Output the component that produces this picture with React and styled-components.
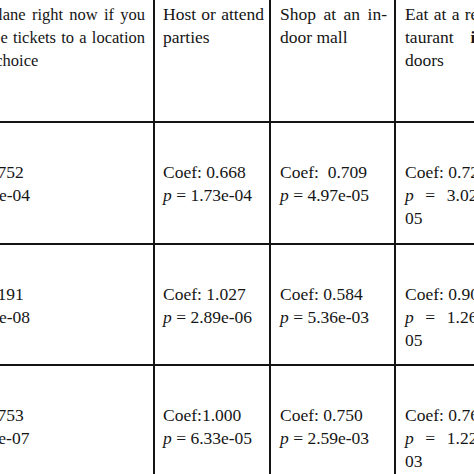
import React from "react";
import styled, { createGlobalStyle } from "styled-components";

const Global = createGlobalStyle`
  html, body { margin: 0; padding: 0; background: #fff; overflow: hidden; }
  body { width: 474px; height: 474px; }
`;

const Viewport = styled.div`
  width: 474px;
  height: 474px;
  overflow: hidden;
  background: #fff;
`;

const Table = styled.div`
  display: grid;
  grid-template-columns: 221px 114px 123px 102px;
  grid-template-rows: 121px 120px 119px 120px;
  gap: 2px;
  background: #141414;
  margin-left: -68px;
  width: max-content;
  font-family: "Liberation Serif", "Times New Roman", serif;
  font-size: 17.5px;
  line-height: 23px;
  color: #151515;
`;

const Cell = styled.div`
  background: #fff;
  padding: ${(p) => (p.$head ? "3px" : "38px")} ${(p) => p.$padR} 0 ${(p) => p.$padL};
  font-size: ${(p) => p.$size || "inherit"};
  overflow: hidden;
`;

const Line = styled.div`
  text-align: ${(p) => p.$align || "left"};
  text-align-last: ${(p) => p.$align || "auto"};
  word-spacing: ${(p) => p.$ws || "normal"};
  white-space: ${(p) => (p.$align === "right" ? "nowrap" : "normal")};
  margin-left: ${(p) => (p.$align === "right" ? "-40px" : "0")};
`;

const P = styled.i`
  font-style: italic;
`;

const Strong = styled.b`
  font-weight: bold;
`;

const pLine = (v) => (
  <>
    <P>p</P> = {v}
  </>
);

const cols = [
  { l: "9px", r: "8px" },
  { l: "8px", r: "5px" },
  { l: "9px", r: "7px" },
  { l: "9px", r: "7px" },
];

const J = "justify";

const header = [
  {
    l: "11px",
    size: "16.5px",
    lines: [
      { t: "be on a plane right now if you", a: "right", ws: "2.1px" },
      { t: "free tickets to a location", a: "right", ws: "1.1px" },
      { t: "of your choice" },
    ],
  },
  { lines: [{ t: "Host or attend", a: J, ws: "-1px" }, { t: "parties" }] },
  { lines: [{ t: "Shop at an in-", a: J, ws: "-1px" }, { t: "door mall" }] },
  {
    lines: [
      { t: "Eat at a res-", a: J, ws: "-1.2px" },
      {
        t: (
          <>
            taurant <Strong>in-</Strong>
          </>
        ),
        a: J,
        ws: "-1px",
      },
      { t: "doors" },
    ],
  },
];

const rows = [
  [
    [{ t: "Coef: 0.752" }, { t: pLine("1.23e-04") }],
    [{ t: "Coef: 0.668" }, { t: pLine("1.73e-04") }],
    [{ t: "Coef:\u00a0 0.709" }, { t: pLine("4.97e-05") }],
    [{ t: "Coef: 0.725" }, { t: pLine("3.02e-"), a: J }, { t: "05" }],
  ],
  [
    [{ t: "Coef: 1.191" }, { t: pLine("4.52e-08") }],
    [{ t: "Coef: 1.027" }, { t: pLine("2.89e-06") }],
    [{ t: "Coef: 0.584" }, { t: pLine("5.36e-03") }],
    [{ t: "Coef: 0.903" }, { t: pLine("1.26e-"), a: J }, { t: "05" }],
  ],
  [
    [{ t: "Coef: 0.753" }, { t: pLine("3.11e-07") }],
    [{ t: "Coef:1.000" }, { t: pLine("6.33e-05") }],
    [{ t: "Coef: 0.750" }, { t: pLine("2.59e-03") }],
    [{ t: "Coef: 0.765" }, { t: pLine("1.22e-"), a: J }, { t: "03" }],
  ],
];

const renderLines = (lines) =>
  lines.map((l, k) => (
    <Line key={k} $align={l.a} $ws={l.ws}>
      {l.t}
    </Line>
  ));

export default function App() {
  return (
    <Viewport>
      <Global />
      <Table>
        {header.map((c, i) => (
          <Cell
            key={"h" + i}
            $head
            $size={c.size}
            $padL={c.l || cols[i].l}
            $padR={cols[i].r}
          >
            {renderLines(c.lines)}
          </Cell>
        ))}
        {rows.map((r, ri) =>
          r.map((c, ci) => (
            <Cell key={ri + "-" + ci} $padL={cols[ci].l} $padR={cols[ci].r}>
              {renderLines(c)}
            </Cell>
          ))
        )}
      </Table>
    </Viewport>
  );
}
